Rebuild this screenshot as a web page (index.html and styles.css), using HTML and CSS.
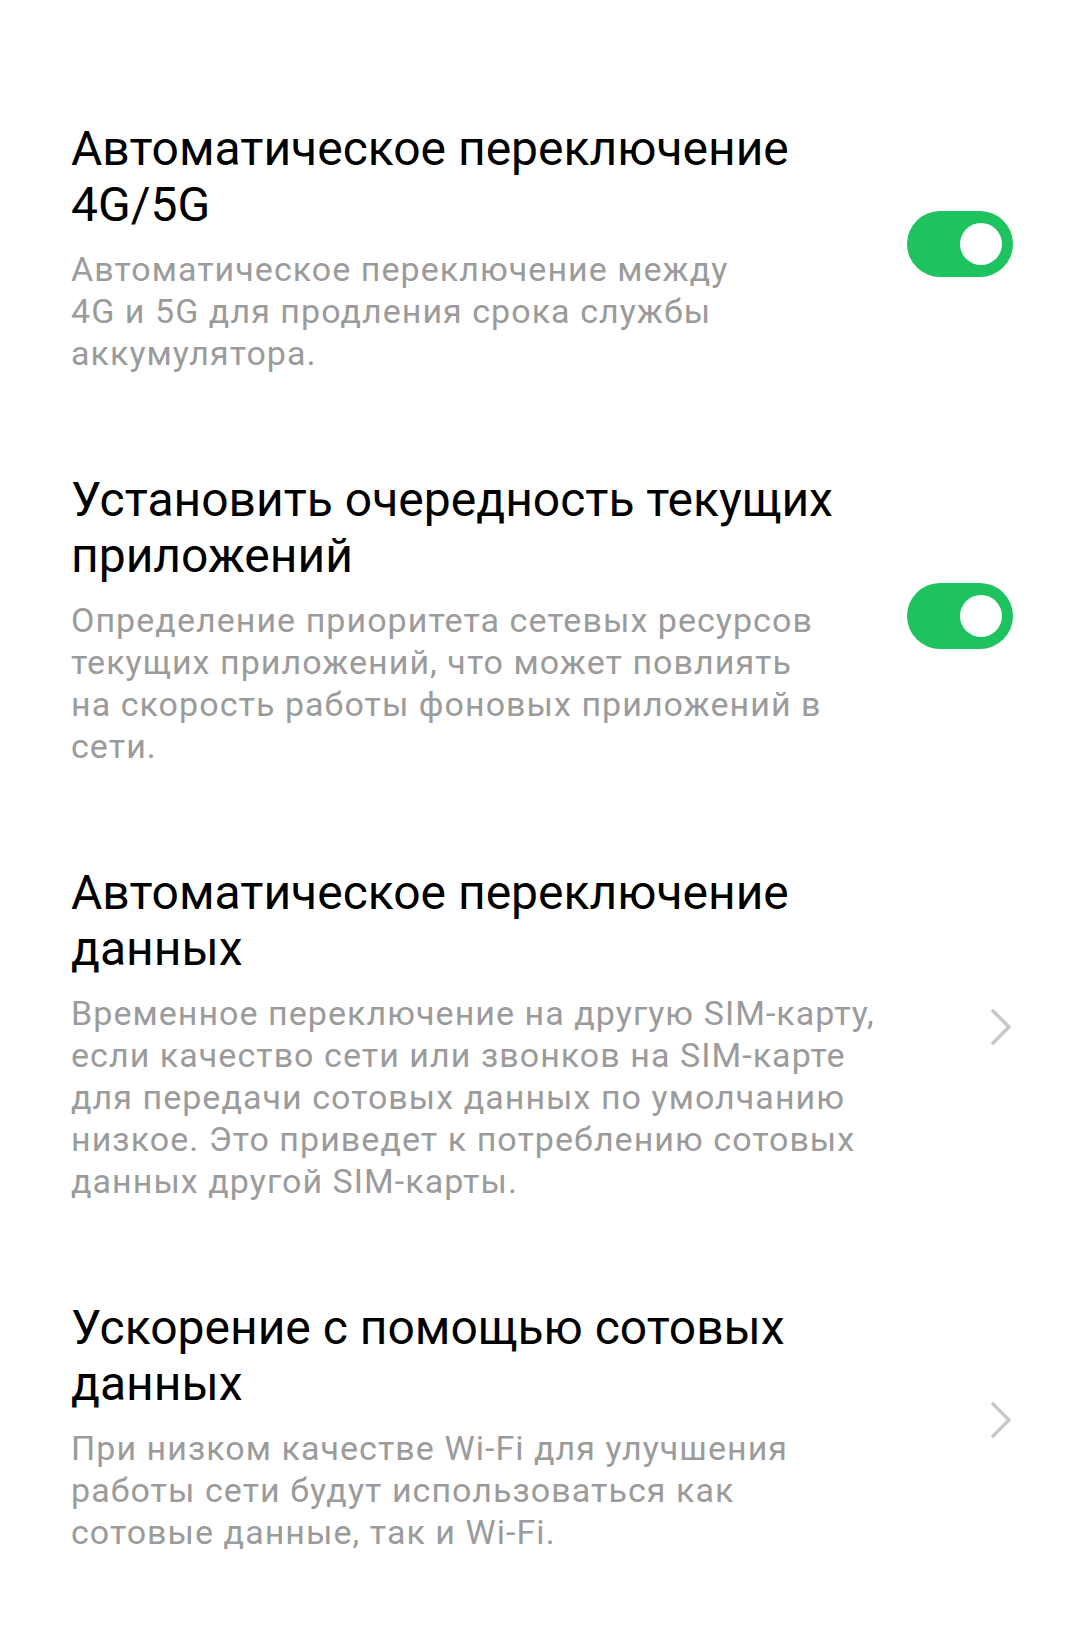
FILE: index.html
```html
<!DOCTYPE html>
<html lang="ru">
<head>
<meta charset="utf-8">
<link rel="stylesheet" href="styles.css">
</head>
<body>
<main class="list">
  <div class="item">
    <div class="text">
      <div class="title">Автоматическое переключение<br>4G/5G</div>
      <div class="sub">Автоматическое переключение между<br>4G и 5G для продления срока службы<br>аккумулятора.</div>
    </div>
    <div class="switch"><span class="knob"></span></div>
  </div>
  <div class="item">
    <div class="text">
      <div class="title">Установить очередность текущих<br>приложений</div>
      <div class="sub">Определение приоритета сетевых ресурсов<br>текущих приложений, что может повлиять<br>на скорость работы фоновых приложений в<br>сети.</div>
    </div>
    <div class="switch"><span class="knob"></span></div>
  </div>
  <div class="item">
    <div class="text">
      <div class="title">Автоматическое переключение<br>данных</div>
      <div class="sub">Временное переключение на другую SIM-карту,<br>если качество сети или звонков на SIM-карте<br>для передачи сотовых данных по умолчанию<br>низкое. Это приведет к потреблению сотовых<br>данных другой SIM-карты.</div>
    </div>
    <svg class="chevron" width="22" height="36" viewBox="0 0 22 36"><polyline points="3,2 19,18 3,34" fill="none" stroke="#c8c8c8" stroke-width="3.6" stroke-linecap="round" stroke-linejoin="round"/></svg>
  </div>
  <div class="item">
    <div class="text">
      <div class="title">Ускорение с помощью сотовых<br>данных</div>
      <div class="sub">При низком качестве Wi-Fi для улучшения<br>работы сети будут использоваться как<br>сотовые данные, так и Wi-Fi.</div>
    </div>
    <svg class="chevron" width="22" height="36" viewBox="0 0 22 36"><polyline points="3,2 19,18 3,34" fill="none" stroke="#c8c8c8" stroke-width="3.6" stroke-linecap="round" stroke-linejoin="round"/></svg>
  </div>
</main>
</body>
</html>
```

FILE: styles.css
```css
html, body {
  margin: 0;
  padding: 0;
  background: #ffffff;
}
body {
  font-family: Roboto, "Noto Sans", sans-serif;
  width: 1080px;
  height: 1637px;
  overflow: hidden;
}
.list {
  display: flex;
  flex-direction: column;
  gap: 98px;
  padding: 121px 67px 0 71px;
}
.item {
  display: flex;
  align-items: center;
  justify-content: space-between;
}
.text {
  display: flex;
  flex-direction: column;
  gap: 15px;
}
.title {
  font-size: 48px;
  line-height: 56px;
  color: #000000;
  white-space: nowrap;
}
.sub {
  font-size: 34px;
  line-height: 42px;
  letter-spacing: 1.05px;
  color: #9b9b9b;
  white-space: nowrap;
}
.switch {
  flex: none;
  width: 106px;
  height: 66px;
  box-sizing: border-box;
  border-radius: 33px;
  background: #1ec35f;
  display: flex;
  align-items: center;
  justify-content: flex-end;
  padding: 0 11px;
  margin-bottom: 8px;
}
.knob {
  width: 42px;
  height: 42px;
  border-radius: 50%;
  background: #ffffff;
}
.chevron {
  flex: none;
  margin-right: 1px;
  margin-bottom: 13px;
}
```
